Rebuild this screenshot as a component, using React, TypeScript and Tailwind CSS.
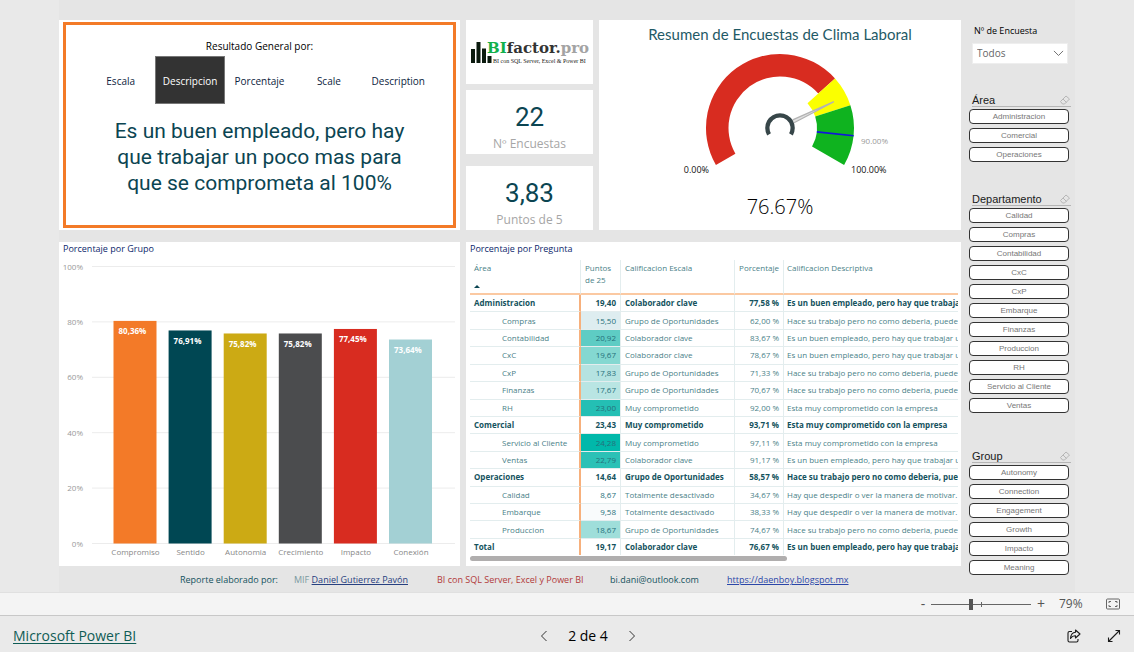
// Power BI report page: "Clima Laboral" survey summary with its slicers,
// gauge, bar chart, matrix and the embed viewer's zoom / paging bars.

import { useState } from 'react'

const TABS = ['Escala', 'Descripcion', 'Porcentaje', 'Scale', 'Description']

const BARS = [
  { name: 'Compromiso', value: 80.36, color: '#f37a28' },
  { name: 'Sentido', value: 76.91, color: '#004753' },
  { name: 'Autonomia', value: 75.82, color: '#ccaa14' },
  { name: 'Crecimiento', value: 75.82, color: '#4b4c4e' },
  { name: 'Impacto', value: 77.45, color: '#d82c20' },
  { name: 'Conexión', value: 73.64, color: '#a3d0d4' },
]

const EMPLEADO = 'Es un buen empleado, pero hay que trabajar un'
const TRABAJO = 'Hace su trabajo pero no como deberia, puede'
const EMPRESA = 'Esta muy comprometido con la empresa'
const DESPEDIR = 'Hay que despedir o ver la manera de motivar.'

type Row = { area: string; puntos: string; escala: string; pct: string; desc: string; fill?: string }

// rows without a fill are group headings / totals
const ROWS: Row[] = [
  { area: 'Administracion', puntos: '19,40', escala: 'Colaborador clave', pct: '77,58 %', desc: EMPLEADO },
  { area: 'Compras', puntos: '15,50', escala: 'Grupo de Oportunidades', pct: '62,00 %', desc: TRABAJO, fill: '#deedf0' },
  { area: 'Contabilidad', puntos: '20,92', escala: 'Colaborador clave', pct: '83,67 %', desc: EMPLEADO, fill: '#5eccc4' },
  { area: 'CxC', puntos: '19,67', escala: 'Colaborador clave', pct: '78,67 %', desc: EMPLEADO, fill: '#84d8d1' },
  { area: 'CxP', puntos: '17,83', escala: 'Grupo de Oportunidades', pct: '71,33 %', desc: TRABAJO, fill: '#b5e3e1' },
  { area: 'Finanzas', puntos: '17,67', escala: 'Grupo de Oportunidades', pct: '70,67 %', desc: TRABAJO, fill: '#b9e5e3' },
  { area: 'RH', puntos: '23,00', escala: 'Muy comprometido', pct: '92,00 %', desc: EMPRESA, fill: '#24bfb4' },
  { area: 'Comercial', puntos: '23,43', escala: 'Muy comprometido', pct: '93,71 %', desc: EMPRESA },
  { area: 'Servicio al Cliente', puntos: '24,28', escala: 'Muy comprometido', pct: '97,11 %', desc: EMPRESA, fill: '#01b8aa' },
  { area: 'Ventas', puntos: '22,79', escala: 'Colaborador clave', pct: '91,17 %', desc: EMPLEADO, fill: '#2bc1b6' },
  { area: 'Operaciones', puntos: '14,64', escala: 'Grupo de Oportunidades', pct: '58,57 %', desc: TRABAJO },
  { area: 'Calidad', puntos: '8,67', escala: 'Totalmente desactivado', pct: '34,67 %', desc: DESPEDIR, fill: '#ffffff' },
  { area: 'Embarque', puntos: '9,58', escala: 'Totalmente desactivado', pct: '38,33 %', desc: DESPEDIR, fill: '#f9fbfc' },
  { area: 'Produccion', puntos: '18,67', escala: 'Grupo de Oportunidades', pct: '74,67 %', desc: TRABAJO, fill: '#9fdeda' },
  { area: 'Total', puntos: '19,17', escala: 'Colaborador clave', pct: '76,67 %', desc: EMPLEADO },
]

const SLICERS = [
  { title: 'Área', items: ['Administracion', 'Comercial', 'Operaciones'] },
  {
    title: 'Departamento',
    items: ['Calidad', 'Compras', 'Contabilidad', 'CxC', 'CxP', 'Embarque', 'Finanzas', 'Produccion', 'RH', 'Servicio al Cliente', 'Ventas'],
  },
  { title: 'Group', items: ['Autonomy', 'Connection', 'Engagement', 'Growth', 'Impacto', 'Meaning'] },
]

// point on the dial: p in 0..1 over a 240° sweep, centred on (110, 84)
const at = (p: number, r: number) => {
  const a = ((p * 240 - 120) * Math.PI) / 180
  return `${(110 + r * Math.sin(a)).toFixed(2)} ${(84 - r * Math.cos(a)).toFixed(2)}`
}

const band = (from: number, to: number, inner: number, outer: number) => {
  const large = (to - from) * 240 > 180 ? 1 : 0
  return `M${at(from, outer)} A${outer} ${outer} 0 ${large} 1 ${at(to, outer)} L${at(to, inner)} A${inner} ${inner} 0 ${large} 0 ${at(from, inner)} Z`
}

function ResultCard() {
  const [tab, setTab] = useState('Descripcion')
  return (
    <section className="bg-white px-1 py-[2px]">
      <div className="flex h-full flex-col border-3 border-[#f37a28] px-5 pt-[11px]">
        <h2 className="text-center text-[10px] leading-5 text-black">Resultado General por:</h2>
        <div role="tablist" className="grid h-12 grid-cols-5">
          {TABS.map((t) => (
            <button
              key={t}
              role="tab"
              aria-selected={t === tab}
              onClick={() => setTab(t)}
              className={
                t === tab
                  ? 'border border-[#777] bg-[#333] pt-[2px] text-[10px] text-white'
                  : 'pt-[2px] text-[10px] text-[#0c2340]'
              }
            >
              {t}
            </button>
          ))}
        </div>
        <p className="pt-[14px] text-center font-[Roboto] text-[21px] leading-[26px] text-[#0b4552]">
          Es un buen empleado, pero hay
          <br />
          que trabajar un poco mas para
          <br />
          que se comprometa al 100%
        </p>
      </div>
    </section>
  )
}

function Logo() {
  return (
    <div className="flex h-16 items-center justify-center bg-white">
      <svg viewBox="0 0 120 28" className="w-[120px]" role="img" aria-label="BIfactor.pro">
        <path d="M1 11h4v14H1z M6.500 4h4v21h-4z M12 10.500h4V25h-4z M17.500 18h4v7h-4z" fill="#0b1a0e" />
        <text x="17" y="15" fontFamily="'DejaVu Serif',serif" fontSize="15" fontWeight="700">
          <tspan fill="#12b04c">BI</tspan>
          <tspan fill="#333">factor.</tspan>
          <tspan fill="#a3a3a3">pro</tspan>
        </text>
        <text x="23" y="25" fontFamily="'Liberation Serif',serif" fontSize="6" fill="#222">
          BI con SQL Server, Excel &amp; Power BI
        </text>
      </svg>
    </div>
  )
}

function Kpi({ value, label }: { value: string; label: string }) {
  return (
    <div className="flex h-16 flex-col items-center bg-white pt-[13px] whitespace-nowrap">
      <span className="font-[Roboto] text-[26px] leading-7 text-[#0b4552]">{value}</span>
      <span className="text-[12px] leading-[26px] text-[#a6a6a6]">{label}</span>
    </div>
  )
}

function Gauge() {
  return (
    <section className="flex flex-col items-center bg-white pt-1">
      <h2 className="font-[Lato] text-[15px] leading-5 text-[#1f5a66]">Resumen de Encuestas de Clima Laboral</h2>
      <svg viewBox="0 0 220 134" className="h-[134px] w-[220px]" fontFamily="'Open Sans',sans-serif" fontSize="9">
        <path d={band(0, 0.7, 51.5, 74)} fill="#d82c20" />
        <path d={band(0.7, 0.8, 37, 74)} fill="#fbff00" />
        <path d={band(0.8, 1, 37, 74)} fill="#0fb31f" />
        <path d={`M${at(0.9, 37)} L${at(0.9, 74)}`} stroke="#1212e0" strokeWidth="1.600" />
        <path d={`M${at(0.74, 15)} L${at(0.7667, 60)} L${at(0.79, 15)}`} fill="#e2e2e2" stroke="#b3b3b3" strokeWidth="1.300" />
        <path d={band(0, 1, 10.5, 14.8)} fill="#374649" />
        <text x="39" y="129" textAnchor="end" fill="#111">0.00%</text>
        <text x="181" y="129" fill="#111">100.00%</text>
        <text x="191" y="100" fontSize="8" fill="#999">90.00%</text>
      </svg>
      <span className="pt-[13px] text-[20px] leading-8 font-light text-black">76.67%</span>
    </section>
  )
}

function BarChart() {
  return (
    <section className="flex flex-col bg-white">
      <h2 className="px-1 text-[9px] leading-[14px] text-[#0c1f6b]">Porcentaje por Grupo</h2>
      <svg viewBox="0 0 401 310" className="w-full" fontFamily="'Open Sans',sans-serif" fontSize="8">
        {[0, 20, 40, 60, 80, 100].map((v) => (
          <g key={v}>
            <path d={`M33 ${287.5 - v * 2.77}H396`} stroke="#ececec" />
            <text x="24" y={290.5 - v * 2.77} textAnchor="end" fill="#999">{v}%</text>
          </g>
        ))}
        {BARS.map((b, i) => (
          <g key={b.name}>
            <rect x={54.5 + i * 55.1} y={287.5 - b.value * 2.77} width="43" height={b.value * 2.77} fill={b.color} />
            <text x={59.5 + i * 55.1} y={301 - b.value * 2.77} fontWeight="700" fill="#fff">
              {b.value.toFixed(2).replace('.', ',')}%
            </text>
            <text x={76.5 + i * 55.1} y="299" textAnchor="middle" fill="#888">{b.name}</text>
          </g>
        ))}
      </svg>
    </section>
  )
}

function Matrix() {
  const line = 'border-r border-[#e3edee]'
  return (
    <section className="bg-white pr-[3px] pl-1">
      <h2 className="text-[9px] leading-[14px] text-[#0c1f6b]">Porcentaje por Pregunta</h2>
      <div className="mt-1 overflow-hidden">
        <table className="h-[295px] w-full table-fixed border-separate border-spacing-0 text-[8px] leading-3 whitespace-nowrap text-[#4a7f88]">
          <colgroup>
            <col className="w-[111px]" />
            <col className="w-[40px]" />
            <col className="w-[114px]" />
            <col className="w-[49px]" />
            <col />
          </colgroup>
          <thead>
            <tr className="h-[35px] text-left align-top *:border-b-2 *:border-b-[#fbc9a2] *:pt-[2px] *:font-normal">
              <th className={`${line} pl-1`}>
                Área
                <svg viewBox="0 0 6 3" className="mt-[11px] h-[3px] w-[6px]">
                  <path d="M0 3L3 0L6 3Z" fill="#0b4552" />
                </svg>
              </th>
              <th className={`${line} pl-1 whitespace-normal`}>Puntos de 25</th>
              <th className={`${line} pl-1`}>Calificacion Escala</th>
              <th className={`${line} pr-1 text-right`}>Porcentaje</th>
              <th className="pl-[3px]">Calificacion Descriptiva</th>
            </tr>
          </thead>
          <tbody>
            {ROWS.map((r) => (
              <tr
                key={r.area}
                className={
                  r.fill
                    ? '*:border-b *:border-b-[#e3edee]'
                    : 'font-bold text-[#14525d] *:border-b *:border-b-[#e3edee] last:*:border-b-0'
                }
              >
                <td className={`border-r-2 border-r-[#f7b07c] ${r.fill ? 'pl-8' : 'pl-1'}`}>{r.area}</td>
                <td
                  className={`${line} pr-1 text-right ${r.fill ? 'text-[#26707a]' : ''}`}
                  style={{ backgroundColor: r.fill }}
                >
                  {r.puntos}
                </td>
                <td className={`${line} pl-1`}>{r.escala}</td>
                <td className={`${line} pr-1 text-right`}>{r.pct}</td>
                <td className="overflow-hidden pl-[3px]">{r.desc}</td>
              </tr>
            ))}
          </tbody>
        </table>
      </div>
      <div className="mt-px h-[5px] w-[65%] rounded-full bg-[#b0aeae]" />
    </section>
  )
}

function Slicer({ title, items }: { title: string; items: string[] }) {
  return (
    <fieldset>
      <div className="ml-[3px] flex h-[14px] items-end justify-between border-b border-[#b5b5b5]">
        <span className="text-[11px] leading-3 text-[#1a1a1a]">{title}</span>
        <button aria-label={`Borrar ${title}`}>
          <svg viewBox="0 0 12 12" className="size-3" fill="none" stroke="#b0b0b0" strokeWidth="0.900">
            <path d="M1.500 7.500L7 2l3.500 3L5.500 10H3.500z M4 5l3.500 3.500" />
          </svg>
        </button>
      </div>
      <div className="flex flex-col gap-1 pt-[2px] pr-[2px]">
        {items.map((it) => (
          <button key={it} className="h-[15px] rounded-[4px] border border-[#333] bg-white text-[8px] leading-3 text-[#777]">
            {it}
          </button>
        ))}
      </div>
    </fieldset>
  )
}

function Sidebar() {
  return (
    <aside className="w-[114px] shrink-0 pt-6 pr-1 pl-2 font-['Liberation_Sans',sans-serif]">
      <div className="flex flex-col px-[3px] font-['Open_Sans',sans-serif]">
        <label htmlFor="encuesta" className="pl-[2px] text-[9px] leading-[14px] text-black">Nº de Encuesta</label>
        <div className="relative mt-[5px]">
          <select id="encuesta" className="block h-[21px] w-full appearance-none border border-[#eee] bg-white pl-1 text-[10px] text-[#666]">
            <option>Todos</option>
          </select>
          <svg viewBox="0 0 12 7" className="pointer-events-none absolute top-[7px] right-1 w-[11px]" fill="none" stroke="#666">
            <path d="M1 1l5 5 5-5" />
          </svg>
        </div>
      </div>
      <div className="flex flex-col pt-[29px]">
        <Slicer {...SLICERS[0]} />
        <div className="pt-[30px]"><Slicer {...SLICERS[1]} /></div>
        <div className="pt-9"><Slicer {...SLICERS[2]} /></div>
      </div>
    </aside>
  )
}

function Credits() {
  return (
    <footer className="grid h-[26px] grid-cols-[114px_143px_173px_117px_1fr] items-center pt-[2px] pl-[121px] text-[9px] whitespace-nowrap text-[#14525d]">
      <span>Reporte elaborado por:</span>
      <span className="text-[#7a9a9f]">
        MIF <a href="#autor" className="text-[#274080] underline">Daniel Gutierrez Pavón</a>
      </span>
      <span className="text-[#b23a3a]">BI con SQL Server, Excel y Power BI</span>
      <span>bi.dani@outlook.com</span>
      <a href="https://daenboy.blogspot.mx" className="text-[#2b46a8] underline">https://daenboy.blogspot.mx</a>
    </footer>
  )
}

function ZoomBar() {
  const [zoom, setZoom] = useState(79)
  return (
    <div className="flex h-6 items-center justify-end border-t border-b border-t-[#e0e0e0] border-b-[#c8c8c8] bg-[#f4f4f4] pr-[13px] text-[#555]">
      <button aria-label="Alejar" className="w-2 text-center text-[14px] leading-5">-</button>
      <div className="relative mx-1 flex h-5 w-[100px] items-center">
        <input
          type="range"
          aria-label="Zoom"
          min={0}
          max={200}
          value={zoom}
          onChange={(e) => setZoom(Number(e.target.value))}
          className="h-px w-full appearance-none bg-[#666] [&::-webkit-slider-thumb]:h-[11px] [&::-webkit-slider-thumb]:w-1 [&::-webkit-slider-thumb]:appearance-none [&::-webkit-slider-thumb]:bg-[#555]"
        />
        <span className="absolute left-1/2 h-[5px] w-px bg-[#666]" />
      </div>
      <button aria-label="Acercar" className="w-3 text-center text-[14px] leading-5">+</button>
      <span className="w-[46px] pl-3 text-[12px]">{zoom}%</span>
      <button aria-label="Ajustar a la página" className="pl-3">
        <svg viewBox="0 0 16 12" className="h-3 w-4" fill="none" stroke="#666">
          <rect x="1.500" y="1" width="13" height="10" rx="1" />
          <path d="M4 5V3.500h2 M10 3.500h2V5 M12 7v1.500h-2 M6 8.500H4V7" />
        </svg>
      </button>
    </div>
  )
}

function PagerBar() {
  return (
    <nav className="grid h-9 grid-cols-[1fr_auto_1fr] items-center bg-[#eaeaea] px-[13px] pt-[3px]">
      <a href="#powerbi" className="text-[14px] text-[#0f5c55] underline underline-offset-2">Microsoft Power BI</a>
      <div className="flex items-center gap-5 pl-[42px] text-black">
        <button aria-label="Página anterior">
          <svg viewBox="0 0 8 12" className="h-3 w-2" fill="none" stroke="#333"><path d="M6.500 1l-5 5 5 5" /></svg>
        </button>
        <span className="text-[14px] leading-5 font-medium">2 de 4</span>
        <button aria-label="Página siguiente">
          <svg viewBox="0 0 8 12" className="h-3 w-2" fill="none" stroke="#333"><path d="M1.500 1l5 5-5 5" /></svg>
        </button>
      </div>
      <div className="flex items-center justify-end gap-[26px]">
        <button aria-label="Compartir">
          <svg viewBox="0 0 14 14" className="size-[14px]" fill="none" stroke="#1a1a1a" strokeWidth="1.100">
            <path d="M5 2.500H2.500Q1 2.500 1 4v7.500Q1 13 2.500 13h7Q11 13 11 11.500V10" />
            <path d="M8.500 1l4.500 4-4.500 4V6.800Q5.500 6.500 3.500 9.500 4 3.500 8.500 3.200z" strokeLinejoin="round" />
          </svg>
        </button>
        <button aria-label="Pantalla completa">
          <svg viewBox="0 0 14 14" className="size-[14px]" fill="none" stroke="#1a1a1a" strokeWidth="1.100">
            <path d="M1.500 12.500l11-11 M8.500 1.500h4v4 M1.500 8.500v4h4" />
          </svg>
        </button>
      </div>
    </nav>
  )
}

export default function App() {
  return (
    <div className="flex min-h-screen flex-col bg-[#e9e9e9] font-['Open_Sans',sans-serif]">
      <div className="mx-[59px] flex grow bg-[#e5e5e5]">
        <main className="min-w-0 flex-1 pt-5">
          <div className="grid grid-cols-[401fr_127fr_362fr] gap-x-[6px] gap-y-3">
            <ResultCard />
            <div className="flex h-[210px] flex-col">
              <Logo />
              <div className="pt-[6px] pb-3"><Kpi value="22" label="Nº Encuestas" /></div>
              <Kpi value="3,83" label="Puntos de 5" />
            </div>
            <Gauge />
            <BarChart />
            <div className="col-span-2 flex flex-col *:grow"><Matrix /></div>
          </div>
          <Credits />
        </main>
        <Sidebar />
      </div>
      <ZoomBar />
      <PagerBar />
    </div>
  )
}
